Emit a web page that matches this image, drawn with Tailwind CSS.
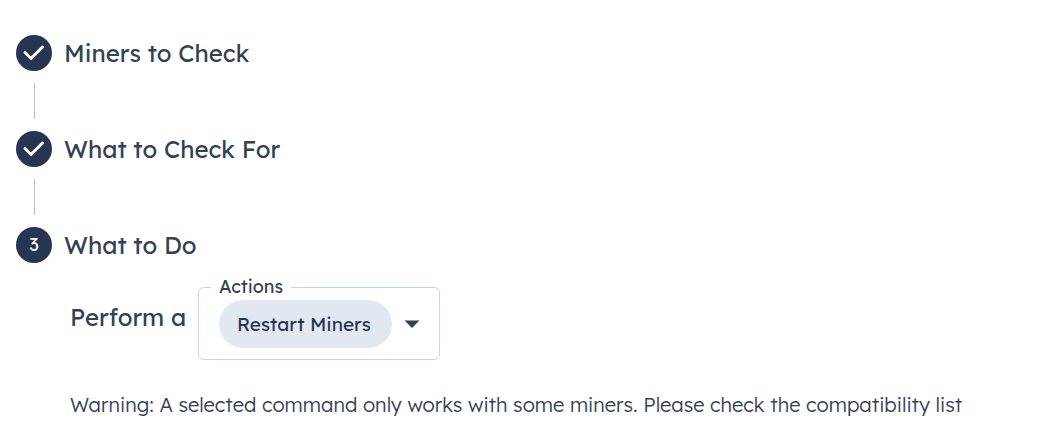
<!DOCTYPE html>
<html lang="en">
  <head>
    <meta charset="UTF-8" />
    <meta name="viewport" content="width=device-width, initial-scale=1.0" />
    <title>Miner Actions</title>
    <script src="https://cdn.jsdelivr.net/npm/@tailwindcss/browser@4"></script>
  </head>
  <body class="bg-white px-4 pt-[35px] pb-6 font-['Lexend','Inter',sans-serif] text-[#334155]">
    <ol>
      <li>
        <div class="flex items-center gap-3">
          <span class="flex size-9 shrink-0 items-center justify-center rounded-full bg-[#263551]">
            <svg class="size-9" viewBox="0 0 36 36" fill="none" stroke="white" stroke-width="3" stroke-linecap="round" aria-label="Completed">
              <path d="M9 17.5 L15 23.5 L26.5 12" />
            </svg>
          </span>
          <h2 class="text-2xl leading-9">Miners to Check</h2>
        </div>
        <div class="my-3 ml-[18px] h-9 border-l border-[#bdbdbd]"></div>
      </li>
      <li>
        <div class="flex items-center gap-3">
          <span class="flex size-9 shrink-0 items-center justify-center rounded-full bg-[#263551]">
            <svg class="size-9" viewBox="0 0 36 36" fill="none" stroke="white" stroke-width="3" stroke-linecap="round" aria-label="Completed">
              <path d="M9 17.5 L15 23.5 L26.5 12" />
            </svg>
          </span>
          <h2 class="text-2xl leading-9">What to Check For</h2>
        </div>
        <div class="my-3 ml-[18px] h-9 border-l border-[#bdbdbd]"></div>
      </li>
      <li>
        <div class="flex items-center gap-3">
          <span class="flex size-9 shrink-0 items-center justify-center rounded-full bg-[#263551] text-lg text-white">3</span>
          <h2 class="text-2xl leading-9">What to Do</h2>
        </div>
        <form class="pt-3 pl-[54px]">
          <div class="flex items-start">
            <span class="w-32 shrink-0 pt-6 text-2xl leading-9">Perform a</span>
            <fieldset class="w-[242px] rounded-md border border-[#cbd5e1] px-3 pb-[11px]">
              <legend class="px-2 text-lg leading-6">
                <label for="action">Actions</label>
              </legend>
              <div class="grid items-center pt-px pr-[7px] pl-2">
                <span class="col-start-1 row-start-1 h-12 w-[173px] rounded-full bg-[#e2e8f0]"></span>
                <svg class="col-start-1 row-start-1 h-2 w-4 justify-self-end" viewBox="0 0 16 8" fill="#334155" aria-hidden="true">
                  <path d="M0.5 0.5 H15.5 L8 8 Z" />
                </svg>
                <select id="action" name="action" class="col-start-1 row-start-1 h-12 w-full appearance-none bg-transparent pl-[18px] text-[19px] text-[#263551]">
                  <option>Restart Miners</option>
                </select>
              </div>
            </fieldset>
          </div>
          <p class="pt-8 text-xl leading-[26px] font-light">Warning: A selected command only works with some miners. Please check the compatibility list</p>
        </form>
      </li>
    </ol>
  </body>
</html>
